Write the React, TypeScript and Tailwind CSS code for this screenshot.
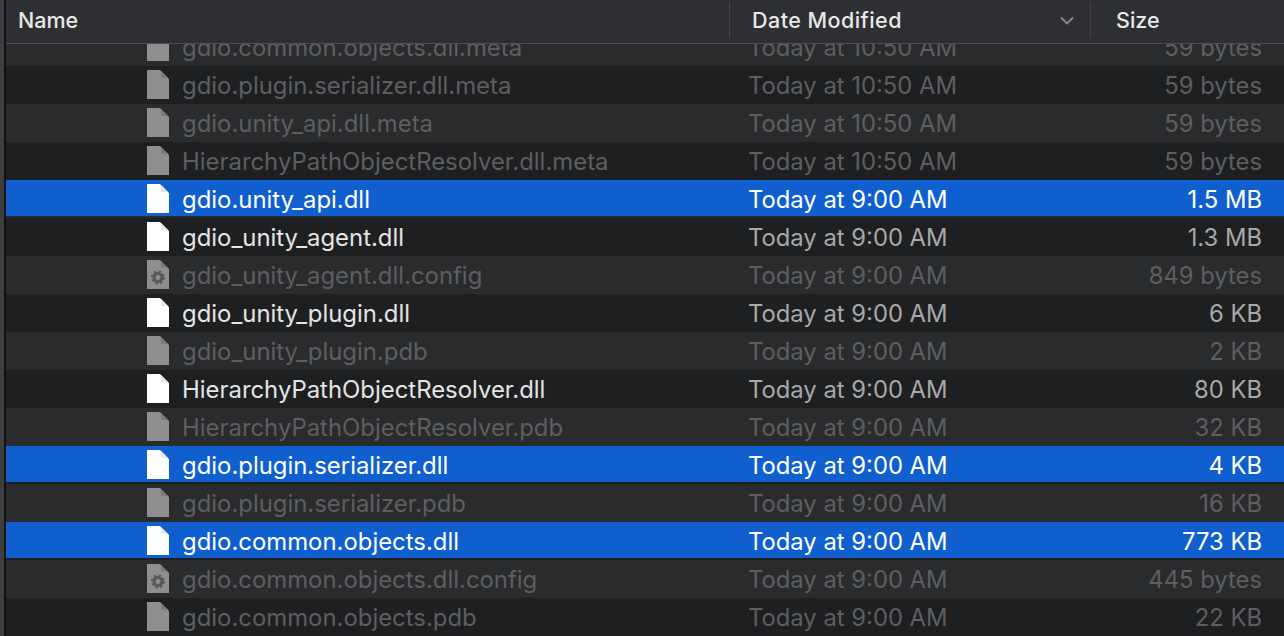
const rows = [
  { name: 'gdio.common.objects.dll.meta', date: 'Today at 10:50 AM', size: '59 bytes', kind: 'file', state: 'dim' },
  { name: 'gdio.plugin.serializer.dll.meta', date: 'Today at 10:50 AM', size: '59 bytes', kind: 'file', state: 'dim' },
  { name: 'gdio.unity_api.dll.meta', date: 'Today at 10:50 AM', size: '59 bytes', kind: 'file', state: 'dim' },
  { name: 'HierarchyPathObjectResolver.dll.meta', date: 'Today at 10:50 AM', size: '59 bytes', kind: 'file', state: 'dim' },
  { name: 'gdio.unity_api.dll', date: 'Today at 9:00 AM', size: '1.5 MB', kind: 'file', state: 'selected' },
  { name: 'gdio_unity_agent.dll', date: 'Today at 9:00 AM', size: '1.3 MB', kind: 'file', state: 'normal' },
  { name: 'gdio_unity_agent.dll.config', date: 'Today at 9:00 AM', size: '849 bytes', kind: 'config', state: 'dim' },
  { name: 'gdio_unity_plugin.dll', date: 'Today at 9:00 AM', size: '6 KB', kind: 'file', state: 'normal' },
  { name: 'gdio_unity_plugin.pdb', date: 'Today at 9:00 AM', size: '2 KB', kind: 'file', state: 'dim' },
  { name: 'HierarchyPathObjectResolver.dll', date: 'Today at 9:00 AM', size: '80 KB', kind: 'file', state: 'normal' },
  { name: 'HierarchyPathObjectResolver.pdb', date: 'Today at 9:00 AM', size: '32 KB', kind: 'file', state: 'dim' },
  { name: 'gdio.plugin.serializer.dll', date: 'Today at 9:00 AM', size: '4 KB', kind: 'file', state: 'selected' },
  { name: 'gdio.plugin.serializer.pdb', date: 'Today at 9:00 AM', size: '16 KB', kind: 'file', state: 'dim' },
  { name: 'gdio.common.objects.dll', date: 'Today at 9:00 AM', size: '773 KB', kind: 'file', state: 'selected' },
  { name: 'gdio.common.objects.dll.config', date: 'Today at 9:00 AM', size: '445 bytes', kind: 'config', state: 'dim' },
  { name: 'gdio.common.objects.pdb', date: 'Today at 9:00 AM', size: '22 KB', kind: 'file', state: 'dim' },
]

function FileIcon({ kind, dim }: { kind: string; dim: boolean }) {
  const fill = dim ? '#8e8e8e' : '#ffffff'
  return (
    <svg width="22" height="29" viewBox="0 0 22 29" className="-mt-[2px] shrink-0">
      <path d="M0 0H13L22 9V29H0Z" fill={fill} />
      <path d="M14 1V8H21Z" fill={dim ? '#7a7a7a' : '#e4e6ea'} />
      {kind === 'config' && (
        <g fill="none" stroke="#55585c">
          <circle cx="11" cy="17.5" r="4" strokeWidth="3" />
          <circle cx="11" cy="17.5" r="6" strokeWidth="2" strokeDasharray="2.2 2.5" />
        </g>
      )}
    </svg>
  )
}

function Row({ row, index }: { row: (typeof rows)[number]; index: number }) {
  const selected = row.state === 'selected'
  const dim = row.state === 'dim'
  const zebra = index % 2 === 1 ? 'bg-[#1e1f21]' : 'bg-[#2a2b2d]'
  const text = selected ? 'text-white' : dim ? 'text-[#5d5e60]' : 'text-[#e4e4e4]'
  return (
    <div className={`h-[38px] ${zebra}`}>
      <div className={`flex h-[36px] items-center pt-[3px] ${selected ? 'bg-[#0f5fcf]' : ''} ${text}`}>
        <div className="ml-[141px] flex w-[602px] items-center">
          <FileIcon kind={row.kind} dim={dim} />
          <span className="ml-[13px] whitespace-nowrap text-[23.9px]">{row.name}</span>
        </div>
        <span className={`-ml-px w-[339px] whitespace-nowrap ${selected ? 'text-white' : dim ? 'text-[#5d5e60]' : 'text-[#a8a8a8]'}`}>{row.date}</span>
        <span className={`w-[175px] whitespace-nowrap text-right ${selected ? 'text-white' : dim ? 'text-[#5d5e60]' : 'text-[#a8a8a8]'}`}>{row.size}</span>
      </div>
    </div>
  )
}

export default function App() {
  return (
    <div className="flex h-[636px] w-[1284px] overflow-hidden bg-[#2a2b2d] font-['Inter','Liberation_Sans',sans-serif] text-[23.8px]">
      <div className="w-[4px] shrink-0 bg-[#3d3e40]" />
      <div className="w-[2px] shrink-0 bg-[#111214]" />
      <div className="flex min-w-0 flex-1 flex-col">
        <div className="flex h-[44px] shrink-0 items-center border-b border-[#4d4e50] bg-[#2e2f32] pb-[3px] text-[21.5px] font-medium text-[#e8e8e8]">
          <span className="ml-[12px] w-[711px]">Name</span>
          <div className="h-[36px] w-px bg-[#434446]" />
          <span className="ml-[22px] w-[308px] tracking-[0.45px]">Date Modified</span>
          <svg width="14" height="9" viewBox="0 0 14 9" className="text-[#8b8c8e]">
            <path d="M1 1.5L7 7.5L13 1.5" fill="none" stroke="currentColor" strokeWidth="1.8" />
          </svg>
          <div className="ml-[16px] h-[36px] w-px bg-[#434446]" />
          <span className="ml-[25px]">Size</span>
        </div>
        <div className="min-h-0 flex-1 overflow-hidden">
          <div className="-mt-[16px]">
            {rows.map((row, index) => (
              <Row key={row.name} row={row} index={index} />
            ))}
          </div>
        </div>
      </div>
    </div>
  )
}
